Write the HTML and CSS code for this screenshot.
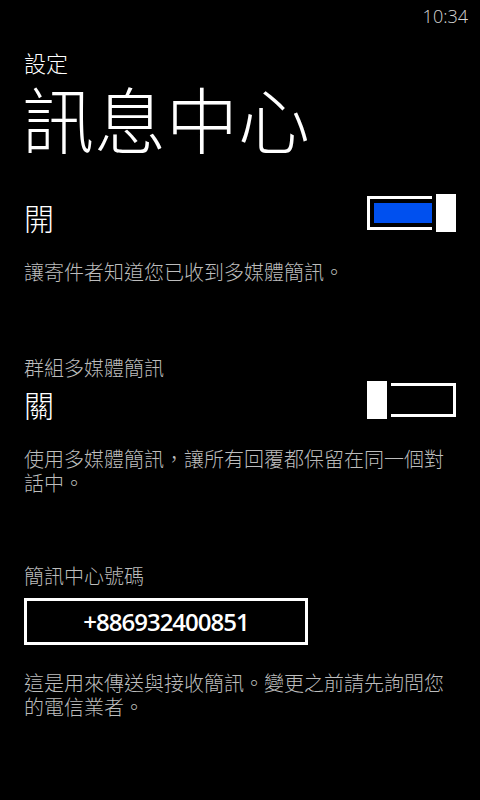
FILE: index.html
```html
<!DOCTYPE html>
<html lang="zh-Hant">
<head>
    <meta charset="UTF-8">
    <meta name="viewport" content="width=device-width, initial-scale=1.0">
    <title>訊息中心</title>
    <link rel="stylesheet" href="styles.css">
</head>
<body>
    <div class="status-bar">
        <span class="clock">10:34</span>
    </div>

    <div class="page">
        <div class="app-name">設定</div>
        <h1 class="page-title">訊息中心</h1>

        <div class="setting-row first">
            <span class="toggle-label">開</span>
            <div class="toggle on">
                <div class="toggle-track"><div class="toggle-fill"></div></div>
                <div class="toggle-thumb"></div>
            </div>
        </div>
        <p class="desc">讓寄件者知道您已收到多媒體簡訊。</p>

        <div class="field-title group">群組多媒體簡訊</div>
        <div class="setting-row">
            <span class="toggle-label">關</span>
            <div class="toggle off">
                <div class="toggle-track"></div>
                <div class="toggle-thumb"></div>
            </div>
        </div>
        <p class="desc">使用多媒體簡訊，讓所有回覆都保留在同一個對話中。</p>

        <div class="field-title center">簡訊中心號碼</div>
        <div class="text-box">+886932400851</div>
        <p class="desc note">這是用來傳送與接收簡訊。變更之前請先詢問您的電信業者。</p>
    </div>
</body>
</html>
```

FILE: styles.css
```css
body {
    margin: 0;
    background-color: #000;
    color: #fff;
    font-family: "Noto Sans CJK TC", "Noto Sans", sans-serif;
    font-weight: 300;
    width: 480px;
    height: 800px;
    overflow: hidden;
}

.status-bar {
    height: 32px;
    display: flex;
    justify-content: flex-end;
    align-items: center;
    padding-right: 12px;
}

.clock {
    font-family: "Open Sans", sans-serif;
    font-size: 18px;
    color: #d6d6d6;
    line-height: 30px;
}

.page {
    padding: 15px 24px 0 24px;
}

.app-name {
    font-size: 22px;
    line-height: 30px;
}

/* Latin primary font keeps the line box small; CJK glyphs come from the fallback */
.page-title {
    margin: 6px 0 0 -2px;
    font-family: "Liberation Sans", "Noto Sans CJK TC", sans-serif;
    font-size: 72px;
    font-weight: 300;
    line-height: 80px;
}

.setting-row {
    display: flex;
    justify-content: space-between;
    align-items: flex-start;
    margin-top: 1px;
}

.setting-row.first {
    margin-top: 31px;
}

.toggle-label {
    font-size: 30px;
    line-height: 38px;
    margin-top: 4px;
}

.toggle {
    position: relative;
    width: 89px;
    height: 38px;
}

.toggle-track {
    margin-top: 2px;
    border: 3px solid #fff;
    padding: 4px;
    height: 20px;
}

.toggle-fill {
    height: 20px;
    background-color: #0050ef;
}

.toggle-thumb {
    position: absolute;
    top: 0;
    width: 20px;
    height: 38px;
    background-color: #fff;
}

.toggle.on .toggle-thumb {
    right: 0;
    border-left: 4px solid #000;
}

.toggle.off .toggle-thumb {
    left: 0;
    border-right: 4px solid #000;
}

.desc {
    margin: 24px 0 0 0;
    font-size: 20px;
    line-height: 24px;
    color: #bdbdbd;
}

.desc.note {
    margin-top: 26px;
}

.field-title {
    font-size: 20px;
    line-height: 24px;
    color: #bdbdbd;
}

.field-title.group {
    margin-top: 72px;
}

.field-title.center {
    margin-top: 69px;
}

.text-box {
    margin-top: 10px;
    width: 278px;
    height: 41px;
    border: 3px solid #fff;
    display: flex;
    align-items: center;
    justify-content: center;
    font-family: "Open Sans", sans-serif;
    font-weight: 600;
    font-size: 24px;
    letter-spacing: -1px;
}
```
